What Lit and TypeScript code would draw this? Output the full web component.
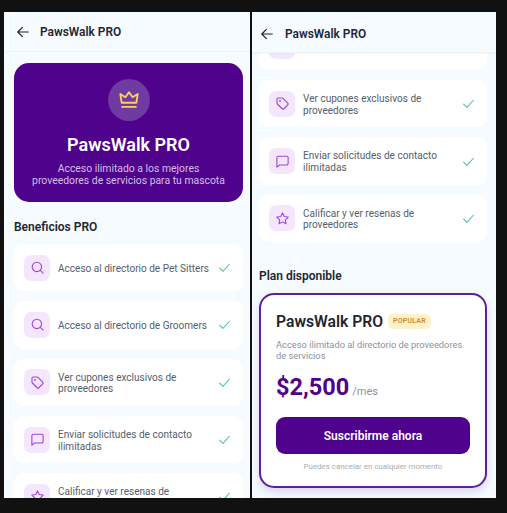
import { LitElement, html, css, svg } from "lit";
import { customElement } from "lit/decorators.js";

const icons: Record<string, unknown> = {
  search: svg`<circle cx="11" cy="11" r="7.500"/><path d="M16.600 16.600 21 21"/>`,
  tag: svg`<path d="M3.200 5.200A2 2 0 0 1 5.200 3.200h6.200a2 2 0 0 1 1.400.6l7.600 7.600a2 2 0 0 1 0 2.800l-6.200 6.200a2 2 0 0 1-2.800 0L3.800 12.800a2 2 0 0 1-.6-1.400Z"/><circle cx="8" cy="8" r=".6"/>`,
  chat: svg`<path d="M3 6a2.500 2.500 0 0 1 2.500-2.500h13A2.500 2.500 0 0 1 21 6v9a2.500 2.500 0 0 1-2.500 2.500H7.500L3 21Z"/>`,
  star: svg`<path d="m12 3 2.800 5.800 6.300.9-4.600 4.400 1.100 6.300L12 17.400l-5.600 3 1.100-6.300-4.600-4.400 6.300-.9Z"/>`,
};

type Row = [string, string];
const rows: Row[] = [
  ["search", "Acceso al directorio de Pet Sitters"],
  ["search", "Acceso al directorio de Groomers"],
  ["tag", "Ver cupones exclusivos de proveedores"],
  ["chat", "Enviar solicitudes de contacto ilimitadas"],
  ["star", "Calificar y ver resenas de proveedores"],
];

@customElement("app-root")
export class AppRoot extends LitElement {
  static styles = css`
    :host { display: block; width: 507px; height: 513px; background: #111; overflow: hidden; font-family: Roboto, "Liberation Sans", sans-serif; }
    .stage { display: flex; gap: 2px; padding: 12px 0 0 4px; height: 486px; }
    .phone { width: 246px; height: 486px; background: #f5fbff; display: flex; flex-direction: column; overflow: hidden; }
    .phone.right { width: 244px; }
    .header { flex: none; height: 40px; box-sizing: border-box; display: flex; align-items: center; gap: 10px; padding: 1px 0 0 12px; border-bottom: 1px solid #edf2f6; font-size: 11.900px; font-weight: 600; color: #1f2530; position: relative; z-index: 1; background: #f5fbff; }
    .right .header { padding: 3px 0 0 8px; gap: 11px; height: 41px; box-shadow: 0 1px 2px rgba(30,40,60,.04); }
    .back { width: 14px; height: 14px; fill: none; stroke: #1f2530; stroke-width: 2; stroke-linecap: round; stroke-linejoin: round; }
    .body { flex: 1; min-height: 0; padding: 11px 7px 0 10px; display: flex; flex-direction: column; overflow: hidden; }
    .right .body { justify-content: flex-end; padding: 0 9px 10px 7px; }
    .hero { flex: none; height: 139px; box-sizing: border-box; padding-top: 16px; background: #4f038c; border-radius: 15px; display: flex; flex-direction: column; align-items: center; color: #fff; }
    .badge { width: 42px; height: 42px; border-radius: 50%; background: #703aa3; display: grid; place-items: center; }
    .crown { width: 22px; height: 22px; fill: none; stroke: #fdcf5c; stroke-width: 2; stroke-linejoin: round; stroke-linecap: round; }
    h1 { margin: 11.500px 0 0; font-size: 18px; line-height: 24px; font-weight: 600; }
    .hero p { margin: 6.500px 0 0; font-size: 10.400px; line-height: 12px; color: #d3bfe6; text-align: center; }
    h2 { flex: none; margin: 17px 0 9px; font-size: 12px; line-height: 16px; font-weight: 600; color: #1f2530; }
    .list { flex: none; display: flex; flex-direction: column; gap: 10px; }
    .row { flex: none; height: 47.300px; box-sizing: border-box; background: #fff; border-radius: 9px; display: flex; align-items: center; padding: 0 12px 0 10px; gap: 8px; }
    .icon { flex: none; width: 26px; height: 26px; border-radius: 7px; background: #f4e6fd; display: grid; place-items: center; }
    .icon svg { width: 15px; height: 15px; fill: none; stroke: #9f47dd; stroke-width: 1.800; stroke-linecap: round; stroke-linejoin: round; }
    .label { flex: 1; padding-top: 2px; font-size: 10.050px; line-height: 11.600px; color: #555e6c; }
    .check { flex: none; width: 13px; height: 13px; margin-left: -4px; fill: none; stroke: #4fc498; stroke-width: 2; stroke-linecap: round; stroke-linejoin: round; }
    .right h2 { margin: 26px 0 9px; }
    .plan { flex: none; height: 195px; box-sizing: border-box; background: #fff; border: 2px solid #5f1f9a; border-radius: 15px; padding: 15.500px 15px 0; box-shadow: 0 4px 8px rgba(80,20,140,.16); }
    .title { display: flex; align-items: center; gap: 5px; font-size: 15.700px; line-height: 22px; font-weight: 600; color: #1f2530; }
    .pill { font-size: 7px; line-height: 15px; font-weight: 600; letter-spacing: .2px; padding: 0 5px; border-radius: 5px; background: #fdf2c9; color: #d98a1e; }
    .desc { margin: 6px 0 0; font-size: 9.300px; line-height: 11px; color: #8b929c; }
    .price { margin-top: 10.500px; display: flex; align-items: baseline; gap: 3px; color: #4f038c; font-size: 23.500px; line-height: 32px; font-weight: 700; }
    .price span { font-size: 11px; font-weight: 400; color: #8b929c; }
    .cta { margin-top: 9px; height: 37px; width: 100%; border: 0; border-radius: 9px; background: #4f038c; color: #fff; font: 600 12px Roboto, sans-serif; }
    .note { margin: 8px 0 0; text-align: center; font-size: 7.900px; line-height: 10px; color: #a8adb5; }
  `;

  private head() {
    return html`<div class="header">
      <svg class="back" viewBox="0 0 24 24"><path d="M21 12H3M11 4l-8 8 8 8"/></svg>
      PawsWalk PRO
    </div>`;
  }

  private row(r: Row) {
    return html`<div class="row">
      <div class="icon"><svg viewBox="0 0 24 24">${icons[r[0]]}</svg></div>
      <div class="label">${r[1]}</div>
      <svg class="check" viewBox="0 0 24 24"><path d="M3 13l6 6L21 6"/></svg>
    </div>`;
  }

  render() {
    return html`<div class="stage">
      <section class="phone">
        ${this.head()}
        <div class="body">
          <div class="hero">
            <div class="badge">
              <svg class="crown" viewBox="0 0 24 24"><path d="M4 15 2.500 5.500 8 9l4-5.500L16 9l5.500-3.500L20 15Z"/><path d="M4.500 19.500h15"/></svg>
            </div>
            <h1>PawsWalk PRO</h1>
            <p>Acceso ilimitado a los mejores<br />proveedores de servicios para tu mascota</p>
          </div>
          <h2>Beneficios PRO</h2>
          <div class="list">${rows.map((r) => this.row(r))}</div>
        </div>
      </section>
      <section class="phone right">
        ${this.head()}
        <div class="body">
          <div class="list">${rows.slice(1).map((r) => this.row(r))}</div>
          <h2>Plan disponible</h2>
          <div class="plan">
            <div class="title">PawsWalk PRO <span class="pill">POPULAR</span></div>
            <p class="desc">Acceso ilimitado al directorio de proveedores de servicios</p>
            <div class="price">$2,500 <span>/mes</span></div>
            <button class="cta">Suscribirme ahora</button>
            <p class="note">Puedes cancelar en cualquier momento</p>
          </div>
        </div>
      </section>
    </div>`;
  }
}
